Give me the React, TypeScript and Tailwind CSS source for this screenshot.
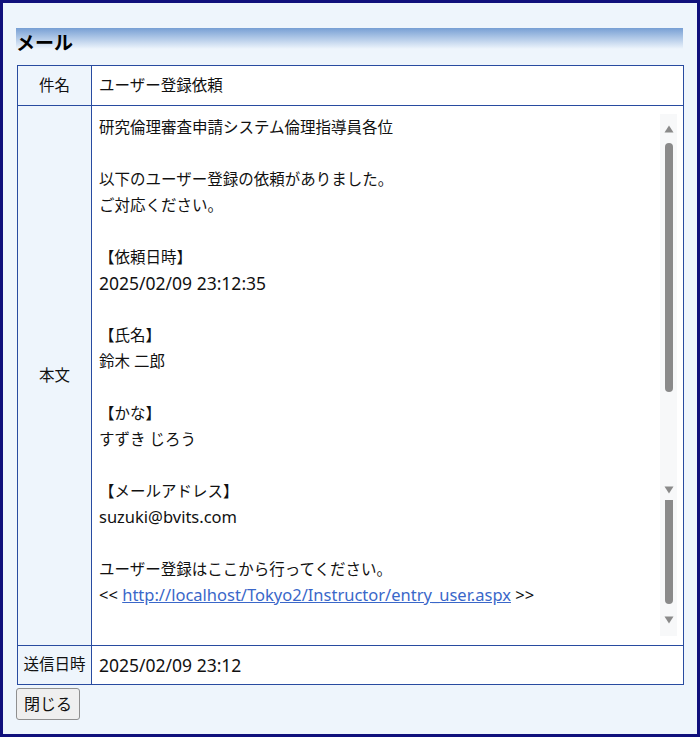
type Line = { text: string; latin?: "word" | "digits" };

const BODY_LINES: Line[] = [
  { text: "研究倫理審査申請システム倫理指導員各位" },
  { text: "" },
  { text: "以下のユーザー登録の依頼がありました。" },
  { text: "ご対応ください。" },
  { text: "" },
  { text: "【依頼日時】" },
  { text: "2025/02/09 23:12:35", latin: "digits" },
  { text: "" },
  { text: "【氏名】" },
  { text: "鈴木 二郎" },
  { text: "" },
  { text: "【かな】" },
  { text: "すずき じろう" },
  { text: "" },
  { text: "【メールアドレス】" },
  { text: "suzuki@bvits.com", latin: "word" },
  { text: "" },
  { text: "ユーザー登録はここから行ってください。" },
];

const LINK = "http://localhost/Tokyo2/Instructor/entry_user.aspx";

function UpArrow() {
  return (
    <svg width="10" height="8" viewBox="0 0 10 8">
      <path d="M5 0.5 L9.5 7.5 L0.5 7.5 Z" fill="#8a8a8a" />
    </svg>
  );
}

function DownArrow() {
  return (
    <svg width="10" height="8" viewBox="0 0 10 8">
      <path d="M0.5 0.5 L9.5 0.5 L5 7.5 Z" fill="#8a8a8a" />
    </svg>
  );
}

function FakeScrollbar() {
  return (
    <div className="w-[17px] shrink-0 bg-[#f7f8f9] flex flex-col items-center pt-[11px]">
      <UpArrow />
      <div className="w-[8px] h-[249px] mt-[10px] rounded-full bg-[#8a8a8a]" />
      <div className="mt-[94px] leading-none">
        <DownArrow />
      </div>
      <div className="w-[8px] h-[104px] mt-[6px] rounded-b-full bg-[#8a8a8a]" />
      <div className="mt-[12px] leading-none">
        <DownArrow />
      </div>
    </div>
  );
}

function latinClass(kind?: "word" | "digits") {
  if (kind === "digits") return "text-[17.5px]";
  if (kind === "word") return "text-[16.5px]";
  return "";
}

export default function App() {
  return (
    <div
      className="h-[737px] border-[3px] border-[#10107c] bg-[#eef5fc] pl-[13px] pr-[14px] text-[15.5px] text-[#111]"
      style={{ fontFamily: '"Noto Sans", "Noto Sans CJK JP", sans-serif' }}
    >
      <div className="mt-[25px] h-[30px] leading-[30px] text-[19px] font-bold text-black bg-[linear-gradient(#779fd4,#eef5fc_21px)]">
        メール
      </div>
      <table className="mt-[7px] ml-px w-[667px] border-collapse bg-white">
        <tbody>
          <tr className="h-[40px]">
            <td className="w-[74px] border border-[#284ba0] bg-[#eef5fc] text-center">件名</td>
            <td className="border border-[#284ba0] px-[7px]">ユーザー登録依頼</td>
          </tr>
          <tr>
            <td className="border border-[#284ba0] bg-[#eef5fc] text-center">本文</td>
            <td className="border border-[#284ba0] pl-[7px] pr-[6px] pt-[8px] pb-[9px] align-top">
              <div className="flex h-[522px]">
                <div className="flex-1 leading-[26px]">
                  {BODY_LINES.map((line, i) => (
                    <div key={i} className={`h-[26px] ${latinClass(line.latin)}`}>
                      {line.text}
                    </div>
                  ))}
                  <div className="h-[26px] text-[16.5px]">
                    &lt;&lt;{" "}
                    <a href="#" className="text-[#3a67c9] underline">
                      {LINK}
                    </a>{" "}
                    &gt;&gt;
                  </div>
                </div>
                <FakeScrollbar />
              </div>
            </td>
          </tr>
          <tr className="h-[39px]">
            <td className="border border-[#284ba0] bg-[#eef5fc] text-center">送信日時</td>
            <td className="border border-[#284ba0] px-[7px] text-[17.5px]">2025/02/09 23:12</td>
          </tr>
        </tbody>
      </table>
      <button className="mt-[3px] h-[32px] w-[64px] rounded-[3px] border border-[#8f8f8f] bg-[#efefef] text-[16px] text-[#111]">
        閉じる
      </button>
    </div>
  );
}
